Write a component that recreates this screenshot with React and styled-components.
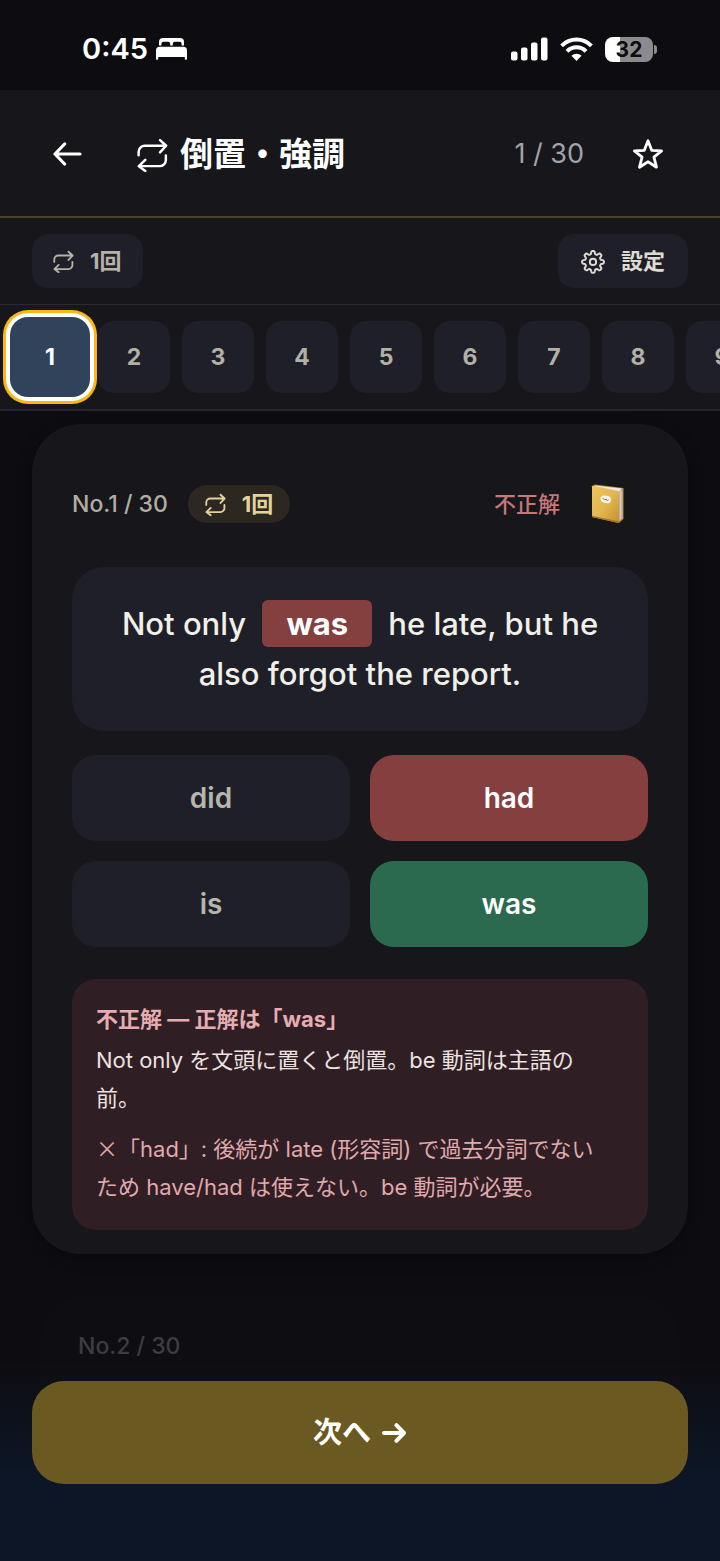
import React, { useState } from "react";
import styled, { createGlobalStyle, css } from "styled-components";

const GlobalStyle = createGlobalStyle`
  * { box-sizing: border-box; }
  html, body { margin: 0; background: #0d0d11; }
  body, button {
    font-family: Inter, "Noto Sans CJK JP", sans-serif;
  }
  button { border: 0; padding: 0; background: none; color: inherit; cursor: pointer; }
  h1, h2, p { margin: 0; }
  svg { display: block; flex: none; }
`;

const Screen = styled.div`
  min-height: 100vh;
  display: flex;
  flex-direction: column;
  background: #0d0d11;
  color: #f1efe6;
  overflow-x: hidden;
`;

const StatusBar = styled.div`
  display: flex;
  align-items: center;
  justify-content: space-between;
  height: 90px;
  padding: 8px 67px 0 82px;
  color: #fff;
`;

const StatusGroup = styled.div`
  display: flex;
  align-items: center;
  gap: ${(p) => p.$gap}px;
`;

const Clock = styled.span`
  font-size: 29px;
  line-height: 36px;
  font-weight: 600;
`;

const Battery = styled.span`
  position: relative;
  width: 48px;
  height: 25px;
  border-radius: 8px;
  background: linear-gradient(90deg, #fff 32%, #8b8b8e 32%);
  color: #0d0d11;
  font-size: 21px;
  line-height: 25px;
  font-weight: 700;
  text-align: center;

  &::after {
    content: "";
    position: absolute;
    left: 49px;
    top: 8px;
    width: 3px;
    height: 9px;
    border-radius: 0 4px 4px 0;
    background: #8b8b8e;
  }
`;

const Header = styled.header`
  display: flex;
  align-items: center;
  height: 128px;
  padding: 2px 36px 0 32px;
  background: #16161b;
  border-bottom: 2px solid #4d3f26;
  color: #fff;
`;

const IconButton = styled.button`
  display: flex;
  align-items: center;
  justify-content: center;
  width: ${(p) => p.$size}px;
  height: ${(p) => p.$size}px;
`;

const Title = styled.h1`
  flex: 1;
  display: flex;
  align-items: center;
  gap: 12px;
  padding-left: 33px;
  font-size: 33px;
  line-height: 48px;
  font-weight: 700;
  white-space: nowrap;
`;

const Counter = styled.span`
  margin-right: 28px;
  font-size: 27px;
  line-height: 36px;
  color: #a3a3a8;
`;

const Toolbar = styled.div`
  display: flex;
  justify-content: space-between;
  padding: 16px 32px;
  background: #16161b;
  border-bottom: 1px solid #2a2a31;
`;

const ToolButton = styled.button`
  display: flex;
  align-items: center;
  gap: 16px;
  height: 54px;
  padding: 0 ${(p) => p.$pad}px;
  border-radius: 16px;
  background: #1f1f29;
  color: ${(p) => p.$color};
  font-size: 22px;
  line-height: 32px;
  font-weight: 700;
`;

const Strip = styled.nav`
  display: flex;
  gap: 12px;
  padding: 16px 14px;
  background: #16161b;
  border-bottom: 2px solid #25252f;
  overflow: hidden;
`;

const Step = styled.button`
  flex: none;
  width: 72px;
  height: 72px;
  border-radius: 16px;
  background: #1f1f29;
  color: #b3b1a6;
  font-size: 23px;
  line-height: 32px;
  font-weight: 700;

  ${(p) =>
    p.$active &&
    css`
      position: relative;
      width: 80px;
      height: 80px;
      margin: -4px;
      border-radius: 18px;
      background: #31435a;
      color: #fff;
      box-shadow: 0 0 0 4px #fff, 0 0 0 7px #fbb614;
    `}
`;

const Main = styled.main`
  flex: 1;
  display: flex;
  flex-direction: column;
  gap: 40px;
  padding: 13px 32px 0;
`;

const Card = styled.article`
  padding: 40px 40px 24px;
  border-radius: 48px;
  background: #16161b;
  box-shadow: 0 4px 16px rgba(0, 0, 0, 0.3);
`;

const NextCard = styled.article`
  flex: 1;
  margin: 0 8px;
  padding: 36px 38px;
  border-radius: 48px 48px 0 0;
  background: #0e0e12;
`;

const CardHead = styled.div`
  display: flex;
  align-items: center;
  height: 80px;
  margin-bottom: 23px;
`;

const CardNumber = styled.span`
  font-size: 23px;
  line-height: 32px;
  font-weight: 500;
  color: ${(p) => p.$color};
`;

const Badge = styled.span`
  display: flex;
  align-items: center;
  gap: 16px;
  height: 38px;
  margin-left: 20px;
  padding: 0 17px;
  border-radius: 19px;
  background: #2c2821;
  color: #e2d39a;
  font-size: 22px;
  line-height: 32px;
  font-weight: 700;
`;

const Verdict = styled.span`
  margin: 0 8px 0 auto;
  color: #c57878;
  font-size: 22px;
  line-height: 32px;
  font-weight: 500;
`;

const Question = styled.div`
  padding: 32px;
  margin-bottom: 24px;
  border-radius: 32px;
  background: #1f1f2a;
  color: #f1f0e6;
  font-size: 31px;
  line-height: 50px;
  font-weight: 500;
  text-align: center;
`;

const Blank = styled.strong`
  margin: 0 8px;
  padding: 5px 24px;
  border-radius: 6px;
  background: #843f3f;
  color: #fff;
  font-weight: 700;
`;

const Options = styled.div`
  display: grid;
  grid-template-columns: 1fr 1fr;
  gap: 20px;
  margin-bottom: 32px;
`;

const tones = {
  idle: { bg: "#1f1f2a", fg: "#b7b6aa" },
  wrong: { bg: "#853f3f", fg: "#ffffff" },
  right: { bg: "#2b6a4f", fg: "#ffffff" },
};

const Option = styled.button`
  height: 86px;
  border-radius: 24px;
  background: ${(p) => tones[p.$tone].bg};
  color: ${(p) => tones[p.$tone].fg};
  font-size: 28px;
  line-height: 36px;
  font-weight: 600;
`;

const Explanation = styled.section`
  padding: 24px 40px 24px 24px;
  border-radius: 24px;
  background: #2f1e23;
`;

const ExplanationTitle = styled.h2`
  color: #e5adb1;
  font-size: 22px;
  line-height: 32px;
  font-weight: 700;
`;

const ExplanationText = styled.p`
  padding-top: ${(p) => p.$top}px;
  color: ${(p) => p.$color};
  font-size: 22px;
  line-height: 38px;
`;

const Cross = styled.span`
  font-family: "Noto Sans CJK JP", sans-serif;
  line-height: 22px;
`;

const Footer = styled.footer`
  position: fixed;
  left: 0;
  right: 0;
  bottom: 0;
  padding: 20px 32px 77px;
  background: linear-gradient(180deg, rgba(13, 22, 38, 0) 0, #0d1626 110px);
`;

const NextButton = styled.button`
  display: flex;
  align-items: center;
  justify-content: center;
  gap: 10px;
  width: 100%;
  height: 103px;
  border-radius: 32px;
  background: #6a5920;
  color: #fff;
  font-size: 29px;
  line-height: 40px;
  font-weight: 700;
`;

const RepeatIcon = ({ width, height, stroke = 2 }) => (
  <svg width={width} height={height} viewBox="0 -3 30 35" fill="none" stroke="currentColor" strokeWidth={stroke} strokeLinecap="round" strokeLinejoin="round" aria-hidden="true">
    <path d="M1.500 15.800v-3.300a6 6 0 0 1 6-6H28M22.300 1l6 5.500-6 6.500" />
    <path d="M28 16v4.300a6 6 0 0 1-6 6H2M8 20.200l-6.300 6.100L8 31" />
  </svg>
);

const BackIcon = () => (
  <svg width="30" height="26" viewBox="0 0 30 26" fill="none" stroke="currentColor" strokeWidth="3.2" strokeLinecap="round" strokeLinejoin="round" aria-hidden="true">
    <path d="M27 13H2M11.600 3 2 13l9.600 10" />
  </svg>
);

const StarIcon = () => (
  <svg width="32" height="32" viewBox="0 0 32 32" fill="none" stroke="currentColor" strokeWidth="2.8" strokeLinejoin="round" aria-hidden="true">
    <path d="M16 2.800 19.700 12.300 29.600 12.900 21.900 19.200 24.500 29.200 16 23.800 7.500 29.200 10.100 19.200 2.400 12.900 12.300 12.300Z" />
  </svg>
);

const gearPath = (() => {
  const points = [];
  for (let i = 0; i < 128; i += 1) {
    const a = (i / 128) * Math.PI * 2;
    const r = 10.2 + 1.6 * (Math.tanh(2.2 * Math.cos(8 * a)) / Math.tanh(2.2));
    points.push(`${(13 + r * Math.sin(a)).toFixed(2)} ${(13 - r * Math.cos(a)).toFixed(2)}`);
  }
  return `M${points.join("L")}Z`;
})();

const GearIcon = () => (
  <svg width="24" height="26" viewBox="0 -2 26 28" fill="none" stroke="currentColor" strokeWidth="2.1" strokeLinejoin="round" aria-hidden="true">
    <path d={gearPath} />
    <circle cx="13" cy="13" r="3.4" />
  </svg>
);

const ArrowIcon = () => (
  <svg width="26" height="22" viewBox="0 0 26 22" fill="none" stroke="currentColor" strokeWidth="4" strokeLinecap="round" strokeLinejoin="round" aria-hidden="true">
    <path d="M3 11h20M15.400 3.200 23 11l-7.600 7.800" />
  </svg>
);

const BedIcon = () => (
  <svg width="31" height="22" viewBox="0 0 31 22" fill="currentColor" aria-hidden="true">
    <path d="M3 7.600V4a4 4 0 0 1 4-4h17a4 4 0 0 1 4 4v3.600h-2.400V5.800a2 2 0 0 0-2-2h-4.800a2 2 0 0 0-2 2v1.800h-2.600V5.800a2 2 0 0 0-2-2H7.400a2 2 0 0 0-2 2v1.800Z" />
    <path d="M0 21V12.500A3.700 3.700 0 0 1 3.700 8.800h23.600a3.700 3.700 0 0 1 3.700 3.700V21a.8.8 0 0 1-.8.8h-.6a.8.8 0 0 1-.8-.8v-2H2.200v2a.8.8 0 0 1-.8.8H.8A.8.8 0 0 1 0 21Z" />
  </svg>
);

const SignalIcon = () => (
  <svg width="37" height="24" viewBox="0 0 37 24" fill="currentColor" aria-hidden="true">
    <rect x="0" y="14.5" width="6.5" height="9" rx="2" />
    <rect x="10" y="10.5" width="6.5" height="13" rx="2" />
    <rect x="20" y="5.5" width="6.5" height="18" rx="2" />
    <rect x="30" y="0.5" width="6.5" height="23" rx="2" />
  </svg>
);

const WifiIcon = () => (
  <svg width="33" height="24" viewBox="0 0 33 24" aria-hidden="true">
    <g fill="none" stroke="currentColor" strokeWidth="4">
      <path d="M1.600 8.800a21 21 0 0 1 29.800 0" />
      <path d="M7 14.300a13.400 13.400 0 0 1 19 0" />
    </g>
    <path d="M16.500 24l-5-5.200a7.200 7.200 0 0 1 10 0Z" fill="currentColor" />
  </svg>
);

const BookIcon = () => (
  <svg width="34" height="40" viewBox="0 0 34 40" aria-hidden="true">
    <defs>
      <linearGradient id="cover" x1="0" y1="0" x2="1" y2="1">
        <stop offset="0" stopColor="#efc458" />
        <stop offset="0.5" stopColor="#e3b751" />
        <stop offset="1" stopColor="#c4902c" />
      </linearGradient>
    </defs>
    <path d="M1.500 1.500 4 .5 32.500 4v31L28 39 27 8Z" fill="#b5882f" />
    <path d="M4 1.500 31 4.500 28 8 3 3Z" fill="#ece7e2" />
    <path d="M28 8l3.500-3V34L28 37Z" fill="#bdb1a8" />
    <path d="M29.800 6.500v29" stroke="#e5ddd4" strokeWidth=".8" />
    <path d="M1 2.300Q1 1.600 2 1.800L27 7q1 .3 1 1.200V38q0 1-1 .8L2 33.200q-1-.3-1-1.200Z" fill="url(#cover)" />
    <path d="M1 31.800v.5q0 .8 1 1L27 39q1 .2 1-.8v-.8Z" fill="#a4741f" />
    <path d="M9.500 14.500c0-2.500 1.700-3.400 4-3l3.500.6c2 .4 3 1.600 3 3.500 0 2.500-1 4-4 3.600l-2.500-.4c-2.500-.4-4-1.700-4-4.300Z" fill="#f8f4e6" />
    <path d="M11.600 13.900l2.200 2.200 1.200-1.200 1.300 1.700 1.400-.8" fill="none" stroke="#777567" strokeWidth="1" />
  </svg>
);

const options = [
  { word: "did", tone: "idle" },
  { word: "had", tone: "wrong" },
  { word: "is", tone: "idle" },
  { word: "was", tone: "right" },
];

export default function App() {
  const [current, setCurrent] = useState(1);

  return (
    <>
      <GlobalStyle />
      <Screen>
        <StatusBar>
          <StatusGroup $gap={8}>
            <Clock>0:45</Clock>
            <BedIcon />
          </StatusGroup>
          <StatusGroup $gap={12}>
            <SignalIcon />
            <WifiIcon />
            <Battery>32</Battery>
          </StatusGroup>
        </StatusBar>

        <Header>
          <IconButton $size={72} aria-label="戻る">
            <BackIcon />
          </IconButton>
          <Title>
            <RepeatIcon width={31} height={36} stroke={2.4} />
            倒置・強調
          </Title>
          <Counter>1 / 30</Counter>
          <IconButton $size={72} aria-label="お気に入り">
            <StarIcon />
          </IconButton>
        </Header>

        <Toolbar>
          <ToolButton $pad={21} $color="#b5b3a6">
            <RepeatIcon width={21} height={24} stroke={2.7} />
            1回
          </ToolButton>
          <ToolButton $pad={23} $color="#dedcd2">
            <GearIcon />
            設定
          </ToolButton>
        </Toolbar>

        <Strip aria-label="問題番号">
          {[1, 2, 3, 4, 5, 6, 7, 8, 9].map((n) => (
            <Step key={n} $active={n === current} onClick={() => setCurrent(n)}>
              {n}
            </Step>
          ))}
        </Strip>

        <Main>
          <Card>
            <CardHead>
              <CardNumber $color="#b0aea4">No.1 / 30</CardNumber>
              <Badge>
                <RepeatIcon width={21} height={24} stroke={2.7} />
                1回
              </Badge>
              <Verdict>不正解</Verdict>
              <IconButton $size={80} aria-label="ノート">
                <BookIcon />
              </IconButton>
            </CardHead>

            <Question>
              Not only <Blank>was</Blank> he late, but he also forgot the report.
            </Question>

            <Options>
              {options.map((o) => (
                <Option key={o.word} $tone={o.tone}>
                  {o.word}
                </Option>
              ))}
            </Options>

            <Explanation>
              <ExplanationTitle>不正解 — 正解は「was」</ExplanationTitle>
              <ExplanationText $top={6} $color="#ece2e0">
                Not only を文頭に置くと倒置。be 動詞は主語の前。
              </ExplanationText>
              <ExplanationText $top={13} $color="#e0a9ad">
                <Cross>×</Cross>「had」: 後続が late (形容詞) で過去分詞でないため have/had は使えない。be 動詞が必要。
              </ExplanationText>
            </Explanation>
          </Card>

          <NextCard>
            <CardNumber $color="#3c3c42">No.2 / 30</CardNumber>
          </NextCard>
        </Main>

        <Footer>
          <NextButton>
            次へ
            <ArrowIcon />
          </NextButton>
        </Footer>
      </Screen>
    </>
  );
}
